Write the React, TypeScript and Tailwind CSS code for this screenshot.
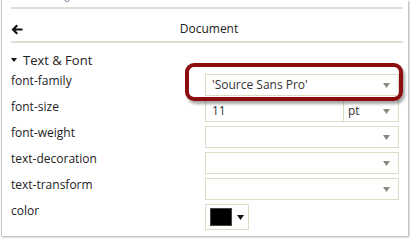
import React from "react";

const Caret = ({ color = "#8a8a80" }: { color?: string }) => (
  <svg width="7" height="5" viewBox="0 0 7 5" className="shrink-0">
    <path d="M0 0 L7 0 L3.5 5 Z" fill={color} />
  </svg>
);

const Select = ({ value }: { value?: string }) => (
  <div className="h-[22px] border border-[#dedbc9] bg-white flex items-center pl-[6px] pr-[8px] text-[#333]">
    <span className="flex-1 truncate leading-none">{value}</span>
    <Caret />
  </div>
);

export default function App() {
  const font = { fontFamily: '"Open Sans", "Noto Sans", sans-serif' };
  return (
    <div className="w-[410px] h-[240px] bg-white overflow-hidden" style={font}>
      <div className="ml-[1px] w-[407px] h-[236px] bg-white border-l border-[#c8c8c8] shadow-[1px_1px_2px_rgba(0,0,0,0.35)] pl-[9px] pr-[5px] text-[12px] text-[#222] relative">
        <div className="h-[7px] overflow-hidden relative">
          <span className="absolute left-[48px] top-[-7px] text-[9px] leading-[12px] text-[#555]">- o</span>
        </div>
        <div className="border-t-2 border-[#e0ded3] h-[34px] flex items-end pb-[4px] relative">
          <svg width="12" height="11" viewBox="0 0 12 11" className="mb-[2px]">
            <path d="M5.5 0.5 L0.5 5.5 L5.5 10.5 L7 9 L4.5 6.6 L11.5 6.6 L11.5 4.4 L4.5 4.4 L7 2 Z" fill="#111" />
          </svg>
          <div className="absolute left-0 right-0 bottom-[4px] text-center text-[12px] leading-[16px] pl-[4px]">Document</div>
        </div>
        <div className="border-t-2 border-[#e0ded3] pt-[9px]">
          <div className="flex items-center gap-[6px] leading-[16px] h-[16px]">
            <svg width="6" height="4" viewBox="0 0 6 4"><path d="M0 0 L6 0 L3 4 Z" fill="#111" /></svg>
            <span className="text-[13px]">Text &amp; Font</span>
          </div>
          <div className="mt-[6px] pr-[4px] flex flex-col">
            <div className="grid grid-cols-2 h-[26px] items-start relative">
              <span className="leading-[16px] mt-[-1px]">font-family</span>
              <Select value="'Source Sans Pro'" />
              <div className="absolute left-[174px] top-[-11px] w-[218px] h-[38px] rounded-[9px] border-[4px] border-[#8c0d0d] shadow-[2px_3px_3px_rgba(0,0,0,0.35)] pointer-events-none" />
            </div>
            <div className="grid grid-cols-2 h-[26px] items-start">
              <span className="leading-[16px] mt-[-1px]">font-size</span>
              <div className="h-[22px] border border-[#dedbc9] bg-white flex items-center text-[#333]">
                <span className="flex-1 pl-[6px] leading-none">11</span>
                <div className="w-[55px] h-full border-l border-[#dedbc9] flex items-center pl-[4px] pr-[8px]">
                  <span className="flex-1 leading-none">pt</span>
                  <Caret />
                </div>
              </div>
            </div>
            <div className="grid grid-cols-2 h-[26px] items-start">
              <span className="leading-[16px] mt-[-1px]">font-weight</span>
              <Select />
            </div>
            <div className="grid grid-cols-2 h-[26px] items-start">
              <span className="leading-[16px] mt-[-1px]">text-decoration</span>
              <Select />
            </div>
            <div className="grid grid-cols-2 h-[26px] items-start">
              <span className="leading-[16px] mt-[-1px]">text-transform</span>
              <Select />
            </div>
            <div className="grid grid-cols-2 h-[26px] items-start">
              <span className="leading-[16px] mt-[-1px]">color</span>
              <div className="w-[44px] h-[26px] border border-[#dedbc9] flex items-center pl-[4px] gap-[5px]">
                <div className="w-[22px] h-[18px] bg-black border border-[#444]" />
                <Caret color="#111" />
              </div>
            </div>
          </div>
        </div>
      </div>
    </div>
  );
}
